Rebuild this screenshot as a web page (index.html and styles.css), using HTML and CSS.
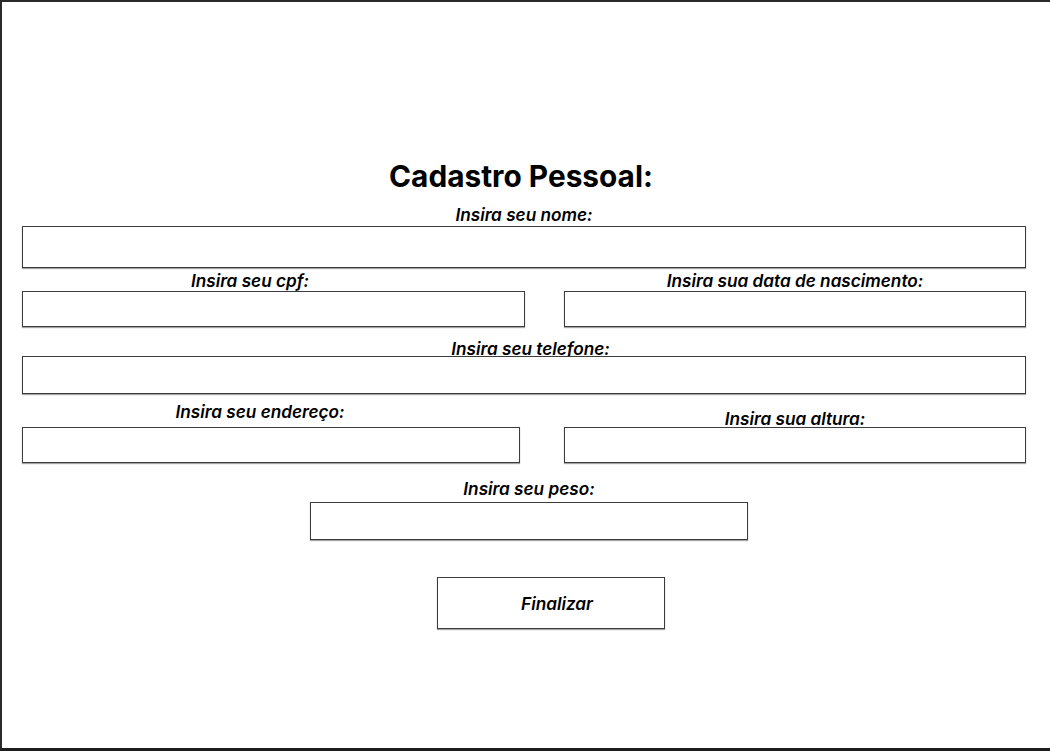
FILE: index.html
```html
<!DOCTYPE html>
<html lang="pt-BR">
<head>
<meta charset="utf-8">
<title>Cadastro Pessoal</title>
<link rel="stylesheet" href="styles.css">
</head>
<body>
<div class="frame">
  <form class="form">
    <h1 class="title">Cadastro Pessoal:</h1>

    <div class="field field-nome">
      <label class="label">Insira seu nome:</label>
      <input class="input input-nome" type="text">
    </div>

    <div class="row row-a">
      <div class="field">
        <label class="label label-cpf">Insira seu cpf:</label>
        <input class="input input-short" type="text">
      </div>
      <div class="field">
        <label class="label">Insira sua data de nascimento:</label>
        <input class="input input-short" type="text">
      </div>
    </div>

    <div class="field field-tel">
      <label class="label label-tel">Insira seu telefone:</label>
      <input class="input input-tel" type="text">
    </div>

    <div class="row row-b">
      <div class="field">
        <label class="label label-end">Insira seu endereço:</label>
        <input class="input input-short" type="text">
      </div>
      <div class="field">
        <label class="label label-alt">Insira sua altura:</label>
        <input class="input input-short" type="text">
      </div>
    </div>

    <div class="field field-peso">
      <label class="label">Insira seu peso:</label>
      <input class="input input-peso" type="text">
    </div>

    <button class="btn" type="button">Finalizar</button>
  </form>
</div>
</body>
</html>
```

FILE: styles.css
```css
* { box-sizing: border-box; }

html, body {
  margin: 0;
  padding: 0;
  background: #ffffff;
  overflow: hidden;
}

body {
  font-family: Inter, "Noto Sans", "Liberation Sans", sans-serif;
  color: #000;
}

.frame {
  height: 751px;
  border-top: 2px solid #2a2a2a;
  border-left: 2px solid #2a2a2a;
  border-bottom: 3px solid #1e1e1e;
}

.form {
  width: 1004px;
  margin-left: 20px;
  padding-top: 157px;
  display: flex;
  flex-direction: column;
}

.title {
  margin: 0;
  padding-right: 6px;
  font-size: 29.8px;
  line-height: 35px;
  font-weight: 700;
  text-align: center;
  letter-spacing: 0;
}

.field {
  display: flex;
  flex-direction: column;
}

.label {
  display: block;
  font-size: 17.2px;
  line-height: 20px;
  font-weight: 600;
  font-style: italic;
  text-align: center;
}

.input {
  display: block;
  margin: 0;
  padding: 0;
  border: 1px solid #3c3c3c;
  background: #fff;
  box-shadow: 0 1px 1px rgba(0, 0, 0, 0.35);
  outline: none;
  font: inherit;
}

.field-nome { margin-top: 11px; }
.field-nome .input { margin-top: 1px; }

.input-nome { width: 1004px; height: 42px; }

.row {
  display: grid;
  align-items: end;
}

.row-a {
  margin-top: 3px;
  grid-template-columns: 503px 462px;
  column-gap: 39px;
}

.input-short { width: 100%; height: 36px; }

.label-cpf { padding-right: 47px; }

.field-tel { margin-top: 12px; }
.label-tel { padding-left: 13px; margin-bottom: -3px; }
.input-tel { width: 1004px; height: 38px; }

.row-b {
  margin-top: 8px;
  grid-template-columns: 498px 462px;
  column-gap: 44px;
}

.label-end { padding-right: 22px; margin-bottom: 5px; }
.label-alt { margin-bottom: -2px; }

.field-peso {
  margin-top: 16px;
  width: 438px;
  margin-left: 288px;
}
.field-peso .label { margin-bottom: 3px; }
.input-peso { width: 438px; height: 38px; }

.btn {
  margin: 37px 0 0 415px;
  width: 228px;
  height: 52px;
  padding: 0 0 0 12px;
  border: 1px solid #3c3c3c;
  background: #fff;
  box-shadow: 0 1px 1px rgba(0, 0, 0, 0.35);
  font-family: inherit;
  font-size: 17.2px;
  font-weight: 600;
  font-style: italic;
  color: #000;
  cursor: pointer;
}
```
